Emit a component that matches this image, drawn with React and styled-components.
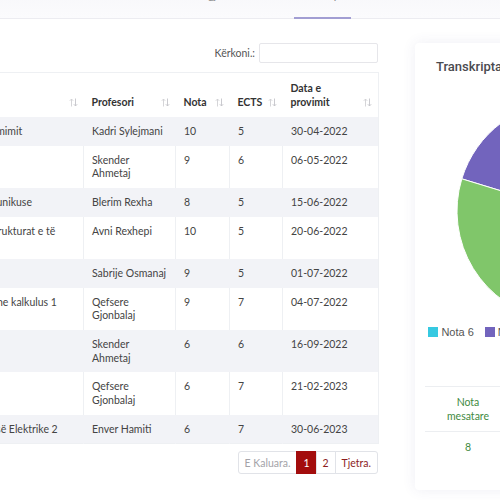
import React from 'react';
import styled, { createGlobalStyle } from 'styled-components';

const GlobalStyle = createGlobalStyle`
  body {
    margin: 0;
    background: #ffffff;
    font-family: Lato, "Open Sans", sans-serif;
    overflow: hidden;
  }
`;

const Page = styled.div`
  width: 500px;
  height: 500px;
  overflow: hidden;
`;

const TabBar = styled.nav`
  display: flex;
  margin-top: -18px;
  height: 36px;
  border-bottom: 1px solid #ececf1;
  background: linear-gradient(#f6f6f9, #fbfbfd);
  padding-left: 28px;
`;

const Tab = styled.div`
  width: ${p => p.w}px;
  font-size: 11px;
  line-height: 14px;
  color: #888;
  display: flex;
  justify-content: center;
  align-items: flex-start;
  padding-top: 6px;
  border-bottom: 2px solid ${p => (p.active ? '#a29ed3' : 'transparent')};
  margin-bottom: -1px;
`;

const Main = styled.div`
  display: flex;
  align-items: flex-start;
  gap: 37px;
  margin-left: -92px;
  padding-top: 24px;
`;

const LeftCol = styled.div`
  width: 470px;
  flex-shrink: 0;
  display: flex;
  flex-direction: column;
`;

const SearchRow = styled.div`
  display: flex;
  justify-content: flex-end;
  align-items: center;
  gap: 4px;
  height: 20px;
  margin-bottom: 9px;

  label {
    font-size: 10.5px;
    color: #555;
  }
`;

const SearchInput = styled.input`
  width: 119px;
  height: 20px;
  box-sizing: border-box;
  border: 1px solid #e6e6ea;
  border-radius: 2px;
  outline: none;
`;

const Table = styled.table`
  width: 470px;
  table-layout: fixed;
  border-collapse: collapse;
  border: 1px solid #eef0f3;
  font-size: 10.5px;
  line-height: 13.5px;
  color: #444;

  th {
    text-align: left;
    vertical-align: bottom;
    font-weight: 700;
    color: #333;
    padding: 8px 6px 8px 8px;
    line-height: 14px;
    background: #fff;
  }

  td {
    vertical-align: top;
    padding: 8px 6px 7.25px 8px;
    border-left: 1px solid #eef0f3;
  }

  tbody tr:nth-child(odd) td {
    background: #f2f3f7;
    border-left-color: #f2f3f7;
  }
`;

const HeadCell = styled.div`
  display: flex;
  justify-content: space-between;
  align-items: flex-end;
`;

const SortIcon = () => (
  <svg width="9" height="9" viewBox="0 0 9 9" style={{ flexShrink: 0, marginBottom: 2 }}>
    <path d="M2.5 8.5V1M0.8 2.8L2.5 1l1.7 1.8" stroke="#d0d0d4" strokeWidth="0.9" fill="none" />
    <path d="M6.5 0.5V8M4.8 6.2L6.5 8l1.7-1.8" stroke="#c4c4c9" strokeWidth="0.9" fill="none" />
  </svg>
);

const Pagination = styled.div`
  display: flex;
  justify-content: flex-end;
  margin-top: 7px;
`;

const PageBtn = styled.div`
  height: 23px;
  box-sizing: border-box;
  display: flex;
  align-items: center;
  padding: 0 ${p => p.pad || 6}px;
  font-size: 10.5px;
  border: 1px solid #e1e3e8;
  margin-left: -1px;
  color: ${p => (p.active ? '#fff' : p.muted ? '#a3a3a8' : '#8c1d1d')};
  background: ${p => (p.active ? '#a30d0d' : '#fff')};
  border-color: ${p => (p.active ? '#a30d0d' : '#e1e3e8')};
  &:first-child {
    border-radius: 3px 0 0 3px;
  }
  &:last-child {
    border-radius: 0 3px 3px 0;
  }
`;

const Card = styled.div`
  width: 304px;
  flex-shrink: 0;
  height: 447px;
  box-sizing: border-box;
  background: #fff;
  border-radius: 4px;
  box-shadow: 0 0 14px rgba(70, 70, 130, 0.09);
  padding: 16px 0 0;
  display: flex;
  flex-direction: column;
`;

const CardTitle = styled.h3`
  margin: 0 0 0 21px;
  font-family: Roboto, "Liberation Sans", sans-serif;
  font-weight: 500;
  font-size: 13px;
  line-height: 16px;
  color: #4a4a4f;
`;

const ChartBox = styled.div`
  display: flex;
  justify-content: center;
  margin-top: 25px;
`;

const Legend = styled.div`
  display: flex;
  justify-content: center;
  gap: 11px;
  margin-top: 4px;
  font-family: "Liberation Sans", Arial, sans-serif;
  font-size: 11px;
  color: #555;
`;

const LegendItem = styled.div`
  display: flex;
  align-items: center;
  gap: 3px;

  &::before {
    content: '';
    width: 8px;
    height: 8px;
    background: ${p => p.color};
    border: 1px solid ${p => p.color};
  }
`;

const Stats = styled.div`
  display: grid;
  grid-template-columns: 86px 1fr 1fr;
  margin: 48px 10px 0;
  font-size: 10.5px;
  line-height: 14px;
  color: #3f8a3f;
  text-align: center;
`;

const StatCell = styled.div`
  padding: 8px 14px;
  border-top: 1px solid #eceef1;
`;

const slices = [
  { color: '#7264bd', from: 197, to: 270 },
  { color: '#36c9e1', from: 270, to: 318 },
  { color: '#f1a54c', from: 318, to: 30 },
  { color: '#e05a5a', from: 30, to: 100 },
  { color: '#80c66a', from: 100, to: 197 },
];

function arc(cx, cy, r, a0, a1) {
  const rad = a => (a * Math.PI) / 180;
  const end = a1 < a0 ? a1 + 360 : a1;
  const x0 = cx + r * Math.cos(rad(a0));
  const y0 = cy + r * Math.sin(rad(a0));
  const x1 = cx + r * Math.cos(rad(end));
  const y1 = cy + r * Math.sin(rad(end));
  const large = end - a0 > 180 ? 1 : 0;
  return `M${cx} ${cy}L${x0} ${y0}A${r} ${r} 0 ${large} 1 ${x1} ${y1}Z`;
}

const rows = [
  ['Teknikat e programimit', 'Kadri Sylejmani', '10', '5', '30-04-2022'],
  ['Matematika 1', 'Skender Ahmetaj', '9', '6', '06-05-2022'],
  ['Shkathtësitë komunikuse', 'Blerim Rexha', '8', '5', '15-06-2022'],
  ['Algoritmet dhe Strukturat e të Dhënave', 'Avni Rexhepi', '10', '5', '20-06-2022'],
  ['Anglisht 1', 'Sabrije Osmanaj', '9', '5', '01-07-2022'],
  ['Algjebra lineare dhe kalkulus 1', 'Qefsere Gjonbalaj', '9', '7', '04-07-2022'],
  ['Matematika 2', 'Skender Ahmetaj', '6', '6', '16-09-2022'],
  ['Matematika 3', 'Qefsere Gjonbalaj', '6', '7', '21-02-2023'],
  ['Bazat e Inxhinierisë Elektrike 2', 'Enver Hamiti', '6', '7', '30-06-2023'],
];

export default function App() {
  return (
    <Page>
      <GlobalStyle />
      <TabBar>
        <Tab w={120}>Profili</Tab>
        <Tab w={146}>Regjistrimi</Tab>
        <Tab w={57} active>Transkripta</Tab>
        <Tab w={120}>Provimet</Tab>
      </TabBar>
      <Main>
        <LeftCol>
          <SearchRow>
            <label>Kërkoni.:</label>
            <SearchInput />
          </SearchRow>
          <Table>
            <colgroup>
              <col style={{ width: 175 }} />
              <col style={{ width: 92 }} />
              <col style={{ width: 54 }} />
              <col style={{ width: 53 }} />
              <col style={{ width: 96 }} />
            </colgroup>
            <thead>
              <tr>
                {['Lënda', 'Profesori', 'Nota', 'ECTS', 'Data e provimit'].map(h => (
                  <th key={h}>
                    <HeadCell>
                      <span style={h === 'Data e provimit' ? { width: 50 } : undefined}>{h}</span>
                      <SortIcon />
                    </HeadCell>
                  </th>
                ))}
              </tr>
            </thead>
            <tbody>
              {rows.map((r, i) => (
                <tr key={i}>
                  {r.map((c, j) => (
                    <td key={j}>{c}</td>
                  ))}
                </tr>
              ))}
            </tbody>
          </Table>
          <Pagination>
            <PageBtn muted>E Kaluara.</PageBtn>
            <PageBtn active>1</PageBtn>
            <PageBtn>2</PageBtn>
            <PageBtn>Tjetra.</PageBtn>
          </Pagination>
        </LeftCol>
        <Card>
          <CardTitle>Transkripta</CardTitle>
          <ChartBox>
            <svg width="224" height="222" viewBox="0 0 224 222">
              {slices.map((s, i) => (
                <path key={i} d={arc(112, 111, 110, s.from, s.to)} fill={s.color} stroke="#fff" strokeWidth="1" />
              ))}
            </svg>
          </ChartBox>
          <Legend>
            <LegendItem color="#36c9e1">Nota 6</LegendItem>
            <LegendItem color="#7264bd">Nota 7</LegendItem>
            <LegendItem color="#80c66a">Nota 8</LegendItem>
            <LegendItem color="#f1a54c">Nota 9</LegendItem>
            <LegendItem color="#e05a5a">Nota 10</LegendItem>
          </Legend>
          <Stats>
            <StatCell>Nota mesatare</StatCell>
            <StatCell>ECTS gjithsej</StatCell>
            <StatCell>Provime</StatCell>
            <StatCell>8</StatCell>
            <StatCell>52</StatCell>
            <StatCell>9</StatCell>
          </Stats>
        </Card>
      </Main>
    </Page>
  );
}
